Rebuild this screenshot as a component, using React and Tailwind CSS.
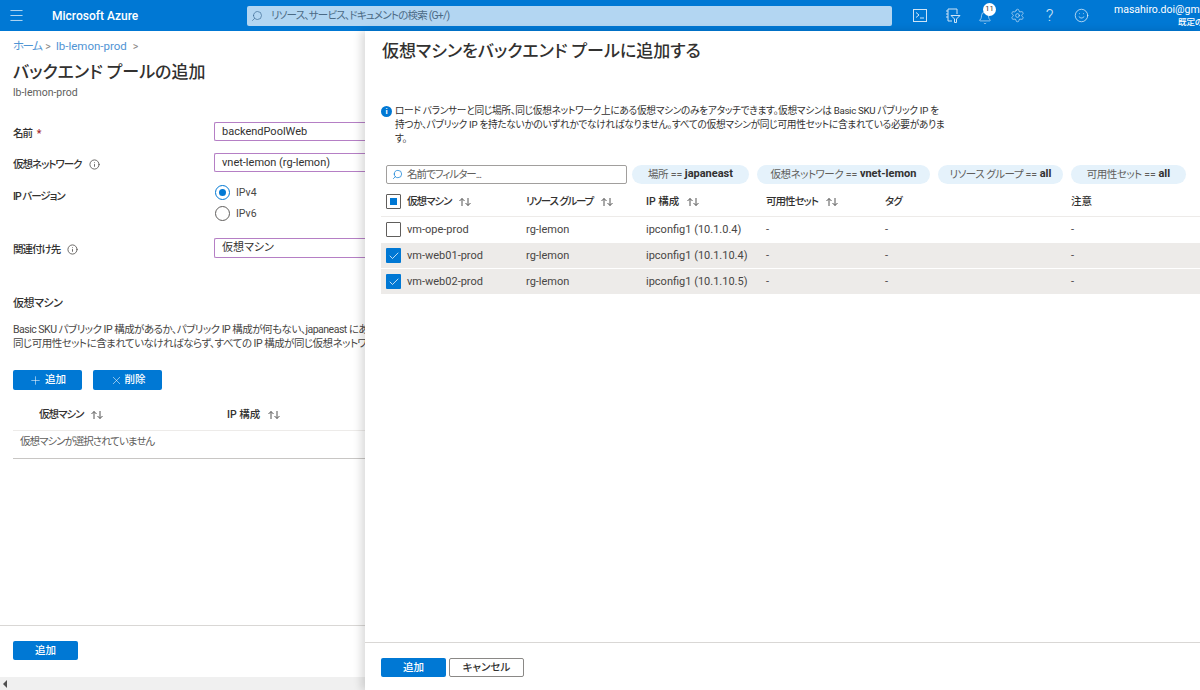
import React from "react";
import { Menu, Search, Settings, Bell, Smile, Plus, X, Check, Info } from "lucide-react";

const F = "font-['Roboto','Noto_Sans_CJK_JP',sans-serif] [font-feature-settings:'palt']";

function Sort() {
  return (
    <svg width="14" height="10" viewBox="0 0 14 10" fill="none" stroke="#555" strokeWidth="1" className="ml-[7px] shrink-0">
      <path d="M4 9V1.5M1.5 4L4 1.5L6.5 4" />
      <path d="M10 1v7.5M7.5 6L10 8.5L12.5 6" />
    </svg>
  );
}

function Head({ w, label, sort = true, t = "tracking-[-1px]" }) {
  return (
    <div className={`${w} flex items-center font-medium text-[#323130] shrink-0`}>
      <span className={t}>{label}</span>
      {sort && <Sort />}
    </div>
  );
}

function Row({ name, ip, checked }) {
  return (
    <div className={`flex items-center h-[25px] pl-[5px] mb-[1px] text-[11px] text-[#484644] ${checked ? "bg-[#edebe9]" : ""}`}>
      {checked ? (
        <div className="w-[15px] h-[15px] mr-[6px] bg-[#0078d4] rounded-[1px] flex items-center justify-center">
          <Check size={12} color="#fff" strokeWidth={1.5} />
        </div>
      ) : (
        <div className="w-[15px] h-[15px] mr-[6px] border border-[#605e5c] rounded-[1px] bg-white" />
      )}
      <div className="flex flex-1 items-center pt-[2px]">
        <div className="w-[119px]">{name}</div>
        <div className="w-[120px]">rg-lemon</div>
        <div className="w-[120px]">{ip}</div>
        <div className="w-[119px]">-</div>
        <div className="w-[186px]">-</div>
        <div>-</div>
      </div>
    </div>
  );
}

function Chip({ k, v, w }) {
  return (
    <div className={`${w} h-[19px] rounded-full bg-[#e5f2fb] flex items-center justify-center text-[10.5px] text-[#605e5c] whitespace-nowrap`}>
      <span className="tracking-[-0.5px]">{k}</span>&nbsp;==&nbsp;<b className="text-[#323130] font-bold text-[11px]">{v}</b>
    </div>
  );
}

function Field({ label, children, info, h }) {
  return (
    <div className={`flex items-start ${h}`}>
      <div className="w-[201px] shrink-0 flex items-center h-[23px] font-medium text-[#323130] text-[10.5px]">
        <span className="tracking-[-1px]">{label}</span>
        {info && <Info size={11} color="#605e5c" className="ml-[7px]" />}
      </div>
      {children}
    </div>
  );
}

function Input({ value, h = "h-[19px]" }) {
  return (
    <div className={`w-[151px] shrink-0 ${h} border border-r-0 border-[#b57fc5] rounded-l-[2px] pl-[7px] pt-[1px] flex items-center text-[11px] text-[#323130] whitespace-nowrap overflow-hidden`}>
      {value}
    </div>
  );
}

function Radio({ label, on }) {
  return (
    <div className="flex items-center h-[15px] text-[10.5px] text-[#484644]">
      <div className={`w-[15px] h-[15px] rounded-full border flex items-center justify-center mr-[6px] ${on ? "border-[#0078d4]" : "border-[#605e5c]"}`}>
        {on && <div className="w-[7px] h-[7px] rounded-full bg-[#0078d4]" />}
      </div>
      {label}
    </div>
  );
}

export default function App() {
  return (
    <div className={`${F} w-[1200px] h-[690px] overflow-hidden bg-white flex flex-col`}>
      {/* top bar */}
      <header className="h-[31px] shrink-0 bg-[#0078d4] flex items-center text-white">
        <Menu size={17} strokeWidth={1.2} color="#d5e8f7" className="ml-[8px] shrink-0" />
        <div className="ml-[27px] w-[195px] text-[12px] font-medium">Microsoft Azure</div>
        <div className="w-[645px] h-[20px] bg-[#b3d6f2] rounded-[2px] flex items-center pl-[4px] text-[10.5px] text-[#4b6a85] shrink-0">
          <Search size={12} color="#3f6d96" strokeWidth={1.4} className="-scale-x-100 mr-[8px]" />
          <span className="tracking-[-0.8px]">リソース、サービス、ドキュメントの検索 (G+/)</span>
        </div>
        <div className="ml-[21px] flex items-center shrink-0">
          <svg width="14" height="13" viewBox="0 0 14 13" fill="none" stroke="#cfe4f6" strokeWidth="1" className="mr-[18px]">
            <rect x="0.5" y="0.5" width="13" height="12" />
            <path d="M3 3.5l3 2.5-3 2.5M7 9h4" />
          </svg>
          <svg width="16" height="15" viewBox="0 0 16 15" fill="none" stroke="#cfe4f6" strokeWidth="1" className="mr-[17px]">
            <path d="M3 1h9v5M3 1v12h4M1 3h2M1 6h2M1 9h2M6 7.5h9l-3.5 3.5v3.5h-2V11z" />
          </svg>
          <div className="relative mr-[16px] w-[16px] h-[16px]">
            <Bell size={14} color="#cfe4f6" strokeWidth={1.2} className="mt-[3px]" />
            <div className="absolute -top-[5px] left-[5px] w-[13px] h-[13px] rounded-full bg-white text-[#323130] text-[7.5px] flex items-center justify-center">11</div>
          </div>
          <Settings size={15} color="#cfe4f6" strokeWidth={1.1} className="mr-[17px]" />
          <span className="text-[17px] font-light text-[#cfe4f6] leading-none w-[15px] text-center mr-[17px]">?</span>
          <Smile size={15} color="#e4f0fa" strokeWidth={1.2} className="mr-[25px]" />
          <div className="w-[86px] overflow-hidden whitespace-nowrap leading-none">
            <div className="text-[10.5px]">masahiro.doi@gmail.com</div>
            <div className="text-[8.5px] font-medium mt-[2px] pl-[64px]">既定のディレクトリ</div>
          </div>
        </div>
      </header>

      <div className="flex-1 flex min-h-0">
        {/* left blade */}
        <div className="w-[365px] shrink-0 flex flex-col overflow-hidden">
          <div className="flex-1 pl-[13px] pt-[9px] min-h-0">
            <div className="flex items-center text-[11.5px] text-[#4f94d4] h-[14px] whitespace-nowrap">
              <span className="tracking-[-1.5px] w-[27px]">ホーム</span>
              <span className="w-[16px] text-center text-[#8a8886] text-[10.5px]">&gt;</span>lb-lemon-prod<span className="ml-[6px] text-[#8a8886] text-[10.5px]">&gt;</span>
            </div>
            <h1 className="text-[17px] font-medium text-[#323130] leading-[24px] mt-[6px] whitespace-nowrap">バックエンド プールの追加</h1>
            <div className="text-[10.5px] text-[#605e5c] leading-[12px] mt-[3px]">lb-lemon-prod</div>
            <div className="mt-[23px]">
              <Field h="h-[31px]" label={<>名前 <span className="text-[#a4262c] ml-[3px]">*</span></>}>
                <Input value="backendPoolWeb" />
              </Field>
              <Field h="h-[32px]" label="仮想ネットワーク" info>
                <Input value="vnet-lemon (rg-lemon)" />
              </Field>
              <Field h="h-[53px]" label="IP バージョン">
                <div className="flex flex-col gap-[6px] pl-[1px]">
                  <Radio label="IPv4" on />
                  <Radio label="IPv6" />
                </div>
              </Field>
              <Field h="h-[59px]" label="関連付け先" info>
                <Input value="仮想マシン" h="h-[20px]" />
              </Field>
            </div>
            <div className="text-[11px] font-medium text-[#323130] h-[14px] leading-[14px] tracking-[-0.5px]">仮想マシン</div>
            <div className="mt-[12px] text-[10.5px] leading-[14px] text-[#484644] whitespace-nowrap w-[352px] overflow-hidden tracking-[-0.5px]">
              <div>Basic SKU パブリック IP 構成があるか、パブリック IP 構成が何もない、japaneast にあ</div>
              <div>同じ可用性セットに含まれていなければならず、すべての IP 構成が同じ仮想ネットワーク</div>
            </div>
            <div className="flex gap-[11px] mt-[19px]">
              <button className="w-[69px] h-[20px] bg-[#0078d4] rounded-[2px] text-white text-[10.5px] font-medium flex items-center justify-center">
                <Plus size={13} strokeWidth={1} className="mr-[3px]" />追加
              </button>
              <button className="w-[69px] h-[20px] bg-[#0078d4] rounded-[2px] text-white text-[10.5px] font-medium flex items-center justify-center">
                <X size={13} strokeWidth={1} className="mr-[2px]" />削除
              </button>
            </div>
            <div className="mt-[9px] h-[32px] border-b border-[#edebe9] flex items-center pl-[26px] text-[10.5px]">
              <Head w="w-[188px]" label="仮想マシン" />
              <Head w="w-[100px]" label="IP 構成" t="tracking-normal" />
            </div>
            <div className="h-[28px] border-b border-[#c8c6c4] flex items-center pl-[7px] pb-[6px] text-[10.5px] text-[#605e5c]">
              <span className="tracking-[-1px]">仮想マシンが選択されていません</span>
            </div>
          </div>
          <div className="h-[52px] border-t border-[#d9d7d5] pl-[13px] pt-[15px] shrink-0 flex items-start">
            <button className="w-[65px] h-[19px] bg-[#0078d4] rounded-[2px] text-white text-[10.5px] font-medium">追加</button>
          </div>
          <div className="h-[13px] bg-[#f0f0f0] shrink-0 flex items-center pl-[3px]">
            <div className="w-0 h-0 border-y-[4px] border-y-transparent border-r-[4px] border-r-[#505050]" />
          </div>
        </div>

        {/* right blade */}
        <div className="flex-1 flex flex-col shadow-[-4px_0_8px_rgba(0,0,0,0.14)] bg-white z-10 min-w-0">
          <div className="flex-1 pt-[8px] min-h-0 overflow-hidden">
            <h2 className="pl-[17px] text-[17px] font-medium text-[#323130] leading-[24px] whitespace-nowrap">仮想マシンをバックエンド プールに追加する</h2>
            <div className="ml-[16px] mt-[41px] flex items-start text-[9.7px] tracking-[-0.3px] leading-[14px] text-[#323130] h-[61px]">
              <div className="w-[11px] h-[11px] rounded-full bg-[#0078d4] text-white text-[8px] font-bold leading-[11px] text-center mt-[2px] mr-[3px] shrink-0">i</div>
              <div className="whitespace-nowrap">
                <div>ロード バランサーと同じ場所、同じ仮想ネットワーク上にある仮想マシンのみをアタッチできます。仮想マシンは Basic SKU パブリック IP を</div>
                <div>持つか、パブリック IP を持たないかのいずれかでなければなりません。すべての仮想マシンが同じ可用性セットに含まれている必要がありま</div>
                <div>す。</div>
              </div>
            </div>
            <div className="ml-[21px] flex items-center">
              <div className="w-[241px] h-[19px] border border-[#a19f9d] rounded-[2px] flex items-center pl-[5px] text-[10.5px] text-[#605e5c] mr-[5px] shrink-0">
                <Search size={11} color="#0078d4" strokeWidth={1.5} className="-scale-x-100 mr-[4px]" />
                <span className="tracking-[-1px]">名前でフィルター...</span>
              </div>
              <div className="flex gap-[8px]">
                <Chip w="w-[117px]" k="場所" v="japaneast" />
                <Chip w="w-[173px]" k="仮想ネットワーク" v="vnet-lemon" />
                <Chip w="w-[125px]" k="リソース グループ" v="all" />
                <Chip w="w-[115px]" k="可用性セット" v="all" />
              </div>
            </div>
            <div className="ml-[16px] mt-[4px]">
              <div className="flex items-center h-[29px] pl-[5px] pb-[1px] border-b border-[#edebe9] text-[10.5px]">
                <div className="w-[15px] h-[15px] mr-[6px] border border-[#605e5c] rounded-[1px] flex items-center justify-center shrink-0">
                  <div className="w-[7px] h-[7px] bg-[#0078d4]" />
                </div>
                <Head w="w-[119px]" label="仮想マシン" />
                <Head w="w-[120px]" label="リソース グループ" t="tracking-[-1.2px]" />
                <Head w="w-[120px]" label="IP 構成" t="tracking-normal" />
                <Head w="w-[119px]" label="可用性セット" />
                <Head w="w-[186px]" label="タグ" sort={false} />
                <Head w="w-[60px]" label="注意" sort={false} t="tracking-normal" />
              </div>
              <Row name="vm-ope-prod" ip="ipconfig1 (10.1.0.4)" />
              <Row name="vm-web01-prod" ip="ipconfig1 (10.1.10.4)" checked />
              <Row name="vm-web02-prod" ip="ipconfig1 (10.1.10.5)" checked />
            </div>
          </div>
          <div className="h-[48px] border-t border-[#d9d7d5] pl-[16px] pt-[15px] flex gap-[3px] items-start shrink-0">
            <button className="w-[65px] h-[19px] bg-[#0078d4] rounded-[2px] text-white text-[10.5px] font-medium">追加</button>
            <button className="w-[75px] h-[19px] border border-[#8a8886] rounded-[2px] text-[#323130] text-[10.5px] font-medium bg-white">キャンセル</button>
          </div>
        </div>
      </div>
    </div>
  );
}
